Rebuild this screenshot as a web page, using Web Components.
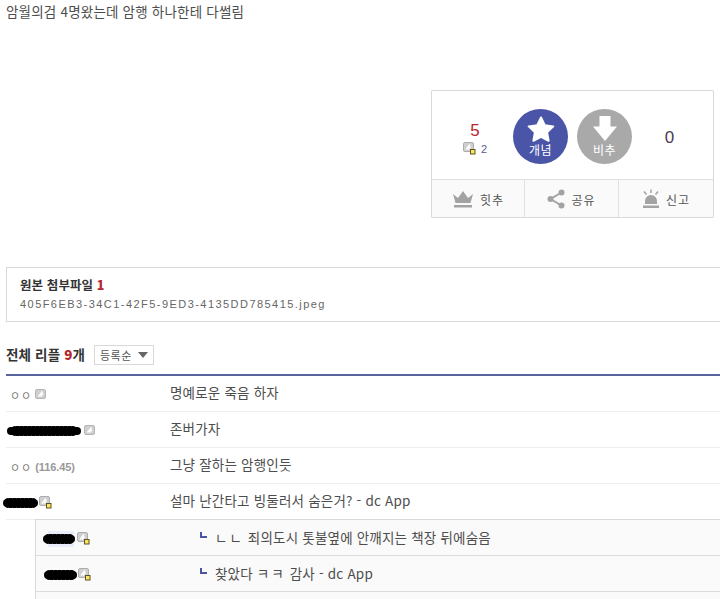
<!DOCTYPE html>
<html lang="ko">
<head>
<meta charset="utf-8">
<title>댓글</title>
<style>
html,body{margin:0;padding:0;height:599px;overflow:hidden;background:#fff}
body{font-family:"Noto Sans CJK KR","Liberation Sans",sans-serif;font-size:13px;color:#333}
</style>
</head>
<body>
<dc-page>
  <dc-body>암월의검 4명왔는데 암행 하나한테 다썰림</dc-body>
  <dc-recommend></dc-recommend>
  <dc-file name="405F6EB3-34C1-42F5-9ED3-4135DD785415.jpeg"></dc-file>
  <dc-comments count="9">
    <dc-comment nick="ㅇㅇ" icon="fix">명예로운 죽음 하자</dc-comment>
    <dc-comment blot="74" blot-x="1" icon="fix" icon-gap="3">존버가자</dc-comment>
    <dc-comment nick="ㅇㅇ" ip="(116.45)">그냥 잘하는 암행인듯</dc-comment>
    <dc-comment blot="35" blot-x="-3" icon="half" icon-gap="1">설마 난간타고 빙둘러서 숨은거? - dc App</dc-comment>
    <dc-replies>
      <dc-comment reply blot="32" icon="half" icon-gap="2" halo><span style="letter-spacing:2px">ㄴㄴ</span> 죄의도시 톳불옆에 안깨지는 책장 뒤에숨음</dc-comment>
      <dc-comment reply blot="33" blot-x="1" icon="half" icon-gap="1">찾았다 <span style="letter-spacing:2px">ㅋㅋ</span> 감사 - dc App</dc-comment>
      <dc-comment reply></dc-comment>
    </dc-replies>
  </dc-comments>
</dc-page>
<script>
const ICON_FIX = `<svg width="12" height="11" viewBox="0 0 12 11" aria-hidden="true"><rect x=".5" y=".5" width="10" height="9" rx="1.5" fill="#cfcfcf" stroke="#b5b5b5"/><path d="M3.5 7.5 7.500 2.500M5.500 7.500 8 4.500" stroke="#fff" stroke-width="1.4" fill="none"/></svg>`;
const ICON_HALF = `<svg width="13" height="13" viewBox="0 0 13 13" aria-hidden="true"><rect x=".5" y=".5" width="10" height="9" rx="1.5" fill="#cfcfcf" stroke="#adadad"/><path d="M3 7.500 7 2.500M5 7.500 7.500 4.500" stroke="#fff" stroke-width="1.4" fill="none"/><rect x="7.500" y="7.500" width="4.500" height="4.500" fill="#ffe35a" stroke="#5b5326"/></svg>`;

function def(name, html){
  customElements.define(name, class extends HTMLElement{
    connectedCallback(){
      if(this.shadowRoot) return;
      const r = this.attachShadow({mode:'open'});
      r.innerHTML = typeof html === 'function' ? html(this) : html;
    }
  });
}

def('dc-page', `<style>:host{display:block;width:740px}</style><slot></slot>`);

def('dc-body', `<style>:host{display:block;height:90px;padding-left:6px;padding-top:2px;box-sizing:border-box;font-size:13.5px;line-height:19px;color:#4d4d4d;letter-spacing:.2px}</style><slot></slot>`);

def('dc-recommend', `<style>
:host{display:block;width:283px;height:128px;margin-left:431px;box-sizing:border-box;border:1px solid #d9d9d9;background:#fff;border-radius:1px}
.top{display:grid;grid-template-columns:81px 55px 9px 55px 1fr;height:89px;padding-top:2px;align-items:center;border-bottom:1px solid #e1e1e1;box-sizing:border-box}
.up{text-align:center;padding-left:5px;margin-top:4px}
.n{font:17px/18px "Liberation Sans",sans-serif;color:#b5272c;position:relative;top:1px}
.sub{display:flex;justify-content:center;align-items:center;gap:5px;font:11px/12px "Liberation Sans",sans-serif;color:#555e93;margin-top:3px}
.btn{width:55px;height:55px;border-radius:50%;display:flex;flex-direction:column;align-items:center;color:#fff;font-size:12px;line-height:14px;padding-top:7px;box-sizing:border-box;letter-spacing:.5px}
.btn svg{display:block;margin-bottom:1px}
.good{background:#4a55a8;grid-column:2}
.bad{background:#a9a9a9;grid-column:4}
.down{font:17px/18px "Liberation Sans",sans-serif;color:#4a3a55;text-align:center;padding-right:6px;margin-top:4px}
.bottom{display:grid;grid-template-columns:92px 1px 93px 1px 1fr;height:37px;background:#fafafa}
.i{display:flex;align-items:center;justify-content:center;gap:6px;font-size:12px;color:#555;letter-spacing:1px;padding-top:1px;box-sizing:border-box}
.i svg{margin-top:-1px}
.line{background:#e1e1e1}
</style>
<div class="top">
  <div class="up"><div class="n">5</div><div class="sub">${ICON_HALF}<span>2</span></div></div>
  <div class="btn good"><svg width="28" height="26" viewBox="0 0 28 26"><path d="M14 1.500 17.800 9.200 26.300 10.400 20.100 16.400 21.600 24.800 14 20.800 6.400 24.800 7.900 16.400 1.700 10.400 10.200 9.200Z" fill="#fff" stroke="#fff" stroke-width="2" stroke-linejoin="round"/></svg><span>개념</span></div>
  <div class="btn bad"><svg width="28" height="26" viewBox="0 0 28 26"><path d="M8.500 0H19.500V10.500H26L14 25 2 10.500H8.500Z" fill="#fff"/></svg><span>비추</span></div>
  <div class="down">0</div>
</div>
<div class="bottom">
  <div class="i"><svg width="22" height="18" viewBox="0 0 22 18"><path d="M1 4 6 8 11 1 16 8 21 4 18.500 13H3.500Z" fill="#a3a3a3"/><rect x="2" y="15" width="18" height="2.500" fill="#a3a3a3"/></svg><span>힛추</span></div>
  <div class="line"></div>
  <div class="i"><svg width="18" height="20" viewBox="0 0 18 20"><path d="M14.500 3.500 3.500 10 14.500 16.500" fill="none" stroke="#a3a3a3" stroke-width="2"/><circle cx="14.500" cy="3.500" r="3" fill="#a3a3a3"/><circle cx="3.500" cy="10" r="3" fill="#a3a3a3"/><circle cx="14.500" cy="16.500" r="3" fill="#a3a3a3"/></svg><span>공유</span></div>
  <div class="line"></div>
  <div class="i"><svg width="18" height="20" viewBox="0 0 18 20"><path d="M3 15V12A6 6 0 0 1 15 12V15Z" fill="#a3a3a3"/><rect x="1" y="16.500" width="16" height="2.500" fill="#a3a3a3"/><path d="M9 .5V4M2 2.500 4.500 5.500M16 2.500 13.500 5.500" stroke="#a3a3a3" stroke-width="1.500" fill="none"/></svg><span>신고</span></div>
</div>`);

def('dc-file', el => `<style>
:host{display:block;margin:49px 0 0 6px;height:55px;box-sizing:border-box;border:1px solid #d9d9d9;padding:7px 13px}
.t{font-size:12.5px;line-height:19px;font-weight:700;color:#333;letter-spacing:.1px}
.t b{color:#b5272c}
.f{font:11px/15px "Liberation Sans",sans-serif;color:#666;letter-spacing:1.45px;margin-top:3px}
</style><div class="t">원본 첨부파일 <b>1</b></div><div class="f">${el.getAttribute('name')}</div>`);

def('dc-comments', el => `<style>
:host{display:block;margin:23px 0 0 6px}
.h{display:flex;align-items:center;gap:9px;height:21px;padding-bottom:8px;border-bottom:2px solid #5a649f}
.h strong{font-size:13.5px;color:#333;letter-spacing:.15px;line-height:18px;margin-bottom:4px}
.h b{color:#b5272c}
.sel{display:flex;align-items:center;justify-content:space-between;box-sizing:border-box;width:60px;height:20px;margin-bottom:1px;border:1px solid #d9d9d9;padding:0 5px 0 5px;font-size:11px;color:#555;letter-spacing:.4px}
.sel i{width:0;height:0;border:5px solid transparent;border-top:6px solid #666;border-bottom:0}
</style><div class="h"><strong>전체 리플 <b>${el.getAttribute('count')}</b>개</strong><span class="sel">등록순<i></i></span></div><slot></slot>`);

def('dc-replies', `<style>:host{display:block;margin-left:29px;border-left:1px solid #d9d9d9;background:#fafafa;border-top:1px solid #d9d9d9;margin-top:-1px}</style><slot></slot>`);

def('dc-comment', el => {
  const reply = el.hasAttribute('reply');
  const blot = el.getAttribute('blot');
  const nick = el.getAttribute('nick');
  const ip = el.getAttribute('ip');
  const icon = el.getAttribute('icon');
  const gap = el.getAttribute('icon-gap') || 3;
  const bx = el.getAttribute('blot-x') || 0;
  const svg = icon === 'fix' ? ICON_FIX : icon === 'half' ? ICON_HALF : '';
  const name = blot
    ? `<span class="blot${el.hasAttribute('halo') ? ' halo' : ''}" style="width:${blot}px;margin-left:${bx}px"></span>`
    : nick ? `<span class="nick">${nick}</span>${ip ? `<span class="ip">${ip}</span>` : ''}` : '';
  return `<style>
  :host{display:grid;grid-template-columns:164px 1fr;align-items:center;height:36px;box-sizing:border-box;border-bottom:1px solid ${reply ? '#dcdcdc' : '#eeeeee'};font-size:13.5px;color:#4d4d4d}
  .who{display:flex;align-items:center;gap:${gap}px;padding-left:${reply ? 7 : (blot ? 0 : 4)}px;position:relative;top:1px;min-height:14px;z-index:0}
  .nick{font-size:11px;letter-spacing:1px;color:#777;line-height:14px}
  .ip{font:bold 11px/14px "Liberation Sans",sans-serif;color:#999;letter-spacing:-.1px}
  .blot{display:block;position:relative;height:8px;background:#000;border-radius:4px}
  .blot::before{content:"";position:absolute;left:7%;right:7%;top:-1px;bottom:-1px;background:repeating-linear-gradient(90deg,#000 0 3px,#333 3px 4px);z-index:-1;border-radius:3px}
  .blot.halo::after{content:"";position:absolute;left:5px;right:1px;top:-4px;bottom:-4px;background:#e9edfa;z-index:-2}
  .txt{letter-spacing:.2px;white-space:nowrap;${reply ? 'display:flex;align-items:center;padding-bottom:2px;' : 'padding-bottom:4px;'}}
  .mark{display:inline-block;width:7px;height:6px;border-left:2px solid #4a55a8;border-bottom:2px solid #4a55a8;box-sizing:border-box;margin:-4px 8px 0 0;flex:none}
  slot{white-space:pre}
  </style>
  <div class="who">${name}${svg}</div>
  <div class="txt">${reply && el.textContent ? '<i class="mark"></i>' : ''}<span><slot></slot></span></div>`;
});
</script>
</body>
</html>
